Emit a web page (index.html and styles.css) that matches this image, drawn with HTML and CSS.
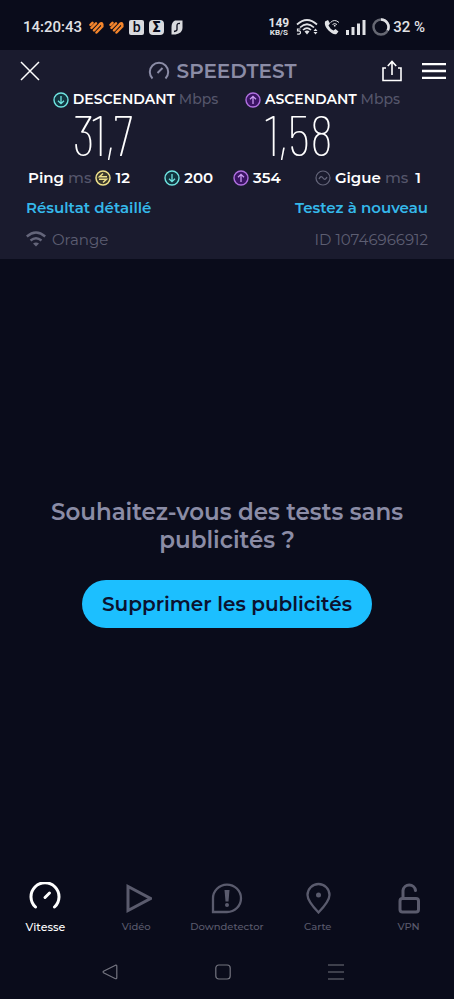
FILE: index.html
```html
<!DOCTYPE html>
<html lang="fr">
<head>
<meta charset="utf-8">
<meta name="viewport" content="width=device-width, initial-scale=1">
<title>Speedtest</title>
<link rel="stylesheet" href="styles.css">
</head>
<body>
<svg class="defs" aria-hidden="true">
  <symbol id="down" viewBox="0 0 16 16"><circle cx="8" cy="8" r="7" fill="#12343f" stroke="#6fe3e0" stroke-width="1.4"/><path d="M8 4v7.500M5 8.700l3 3 3-3" fill="none" stroke="#6fe3e0" stroke-width="1.3"/></symbol>
  <symbol id="up" viewBox="0 0 16 16"><circle cx="8" cy="8" r="7" fill="#3b1464" stroke="#b070e0" stroke-width="1.4"/><path d="M8 12V4.500M5 7.300l3-3 3 3" fill="none" stroke="#c99af0" stroke-width="1.3"/></symbol>
  <symbol id="heart" viewBox="0 0 15 13"><g fill="none" stroke="#f5862c" stroke-width="2.500" stroke-linecap="round" stroke-linejoin="round"><path d="M1.500 3.800L3.500 1.800M2.500 6.800L7 2.300M5 9.300L11 3M7.500 11.500L13.300 5.500M11 3Q12.800 1.200 13.300 3.200V5.500"/></g></symbol>
</svg>
<div class="phone">
  <div class="status">
    <span class="clock">14:20:43</span>
    <svg width="15" height="13"><use href="#heart"/></svg>
    <svg width="15" height="13"><use href="#heart"/></svg>
    <span class="badge badge-b">b</span>
    <span class="badge badge-s">Σ</span>
    <svg width="12" height="15" viewBox="0 0 12 15"><path d="M4 .5h7.500V8q0 5-7 6.500H.5V7Q.5 2 4 .5z" fill="#d9dade"/><path d="M9 3.500Q6 3 6 5.500T6 9.500T3 11.500" fill="none" stroke="#0a0c1b" stroke-width="1.300"/></svg>
    <span class="rate"><b>149</b><small>KB/S</small></span>
    <svg class="wifi5" width="22" height="16" viewBox="0 0 22 16"><g fill="none" stroke="#e1e2e6" stroke-width="1.700"><path d="M1 5.500Q11-3.500 21 5.500M4 8.500Q11 2 18 8.500M7 11Q11 7 15 11"/></g><path d="M8.500 12.500Q11 10.500 13.500 12.500L11 15.500z" fill="#e1e2e6"/><path d="M4.500 10H1.500v2Q4.500 11.500 4.500 13.500T1 15" fill="none" stroke="#e1e2e6" stroke-width="1.200"/><path d="M17.500 12l2-2.500 2 2.500zM17.500 13l2 2.500 2-2.500z" fill="#e1e2e6"/></svg>
    <svg class="call" width="16" height="16" viewBox="0 0 16 16"><path d="M1 2.500L4 1l2 3.500-1.500 2Q6 10 9.500 11.500l2-1.500 3 2.500-2 2.500Q9 16 4.500 11.500T1 2.500z" fill="#e1e2e6"/><g fill="none" stroke="#e1e2e6"><path d="M6.500 3.500q4-4 8.500 0M8.500 5.500q2-2 4.500 0"/></g><circle cx="10.700" cy="6.700" r=".9" fill="#e1e2e6"/></svg>
    <svg class="signal" width="20" height="16" viewBox="0 0 20 16"><path d="M0 11h3v5H0zM5.500 8h3v8h-3zM11 4.500h3V16h-3zM16.500 1h3v15h-3z" fill="#e1e2e6"/></svg>
    <svg class="battery" width="18" height="18" viewBox="0 0 18 18"><circle cx="9" cy="9" r="7.500" fill="none" stroke="#666873" stroke-width="2.500"/><path d="M9 1.500a7.500 7.500 0 0 1 6.800 10.700" fill="none" stroke="#e1e2e6" stroke-width="2.500"/></svg>
    <span class="pct">32 %</span>
  </div>

  <header class="panel">
    <div class="titlebar">
      <button class="icon-btn" aria-label="Fermer"><svg width="20" height="20" viewBox="0 0 20 20"><path d="M1 1l18 18M19 1L1 19" stroke="#fff" stroke-width="1.500"/></svg></button>
      <h1><svg width="22" height="20" viewBox="0 0 22 20"><g fill="none" stroke="#8b8ca6" stroke-width="2"><path d="M4.500 17.500A9.200 9.200 0 1 1 17.500 17.500"/><path d="M9.500 12l5-5"/></g></svg>SPEEDTEST</h1>
      <button class="icon-btn" aria-label="Partager"><svg width="20" height="22" viewBox="0 0 20 22"><path d="M4 8H1v12.500h18V8h-3M10 15V2M5.800 6L10 1.500 14.200 6" fill="none" stroke="#fff" stroke-width="1.600"/></svg></button>
      <button class="icon-btn" aria-label="Menu"><svg width="24" height="16" viewBox="0 0 24 16"><path d="M0 1.200h24M0 8h24M0 14.800h24" stroke="#fff" stroke-width="2.300"/></svg></button>
    </div>
    <div class="results">
      <section class="result"><svg width="16" height="16"><use href="#down"/></svg><h2>DESCENDANT <span>Mbps</span></h2><p>31,7</p></section>
      <section class="result"><svg width="16" height="16"><use href="#up"/></svg><h2>ASCENDANT <span>Mbps</span></h2><p>1,58</p></section>
    </div>
    <div class="latency">
      <div class="stat"><b>Ping <span>ms</span></b><svg width="16" height="16" viewBox="0 0 16 16"><circle cx="8" cy="8" r="7" fill="#39372c" stroke="#eee08a" stroke-width="1.500"/><path d="M12 6.700H4.500L8 3.500M4 9.300h7.500L8 12.500" fill="none" stroke="#eee08a" stroke-width="1.500"/></svg><b>12</b></div>
      <div class="loaded">
        <div class="stat"><svg width="16" height="16"><use href="#down"/></svg><b>200</b></div>
        <div class="stat"><svg width="16" height="16"><use href="#up"/></svg><b>354</b></div>
      </div>
      <div class="stat jitter"><svg width="16" height="16" viewBox="0 0 16 16"><circle cx="8" cy="8" r="7" fill="none" stroke="#64657a" stroke-width="1.200"/><path d="M4 9q2-4 4-1t4-1" fill="none" stroke="#64657a" stroke-width="1.300"/></svg><b>Gigue <span>ms</span></b><b class="value">1</b></div>
    </div>
    <div class="links"><a href="#detail">Résultat détaillé</a><a href="#test">Testez à nouveau</a></div>
    <div class="network">
      <svg width="20" height="16" viewBox="0 0 20 16"><path d="M.8 5.500Q10-2.500 19.200 5.500M4.500 9.500Q10 5 15.500 9.500" fill="none" stroke="#64657a" stroke-width="2.400"/><path d="M7 12.500Q10 10.500 13 12.500L10 15.500z" fill="#64657a"/></svg>
      <span>Orange</span><span class="id">ID 10746966912</span>
    </div>
  </header>

  <main class="promo">
    <h2>Souhaitez-vous des tests sans publicités ?</h2>
    <button class="cta">Supprimer les publicités</button>
  </main>

  <nav class="tabs">
    <a class="tab active" href="#vitesse"><svg width="32" height="32" viewBox="0 0 32 32"><g fill="none" stroke="currentColor" stroke-width="3" stroke-linecap="round"><path d="M6.500 25A14 14 0 1 1 25.500 25"/><path d="M16 15.500l4.500-4.500"/></g></svg>Vitesse</a>
    <a class="tab" href="#video"><svg width="32" height="32" viewBox="0 0 32 32"><path d="M8 4.500v24L30.500 16.500z" fill="none" stroke="currentColor" stroke-width="3"/></svg>Vidéo</a>
    <a class="tab" href="#downdetector"><svg width="32" height="32" viewBox="0 0 32 32"><path d="M2 30V16.500a14 13.700 0 1 1 14 13.500z" fill="none" stroke="currentColor" stroke-width="2.300"/><path d="M13.500 8h5l-1 11.500h-3z" fill="currentColor"/><circle cx="16" cy="23" r="2" fill="currentColor"/></svg>Downdetector</a>
    <a class="tab" href="#carte"><svg width="32" height="32" viewBox="0 0 32 32"><path d="M16.500 30.500Q5.500 19 5.500 13a11 11 0 0 1 22 0Q27.500 19 16.500 30.500z" fill="none" stroke="currentColor" stroke-width="2.300"/><circle cx="16.500" cy="13" r="2.500" fill="currentColor"/></svg>Carte</a>
    <a class="tab" href="#vpn"><svg width="32" height="32" viewBox="0 0 32 32"><rect x="7" y="16.500" width="18.500" height="13.500" rx="2.500" fill="none" stroke="currentColor" stroke-width="3"/><path d="M10 16V8.500a6.300 6.300 0 0 1 12.500 0" fill="none" stroke="currentColor" stroke-width="3" stroke-linecap="round"/></svg>VPN</a>
  </nav>
  <div class="system">
    <button aria-label="Retour"><svg width="16" height="16" viewBox="0 0 16 16"><path d="M13.500 1.200L1.500 7.300q-.8.700 0 1.400l12 6q1.300.3 1.300-1V2.200q0-1.300-1.300-1z" fill="none" stroke="#73747f" stroke-width="1.200"/></svg></button>
    <button aria-label="Accueil"><svg width="16" height="16" viewBox="0 0 16 16"><rect x=".8" y="1" width="14.400" height="14" rx="3" fill="none" stroke="#73747f" stroke-width="1.200"/></svg></button>
    <button aria-label="Applications récentes"><svg width="16" height="16" viewBox="0 0 16 16"><path d="M0 1h16M0 8h16M0 15h16" stroke="#73747f" stroke-width="1.200"/></svg></button>
  </div>
</div>
</body>
</html>
```
FILE: styles.css
```css
* { box-sizing: border-box; }
body {
  margin: 0;
  background: #0a0c1b;
  color: #fff;
  font-family: Montserrat, Inter, sans-serif;
}
h1, h2, p { margin: 0; }
svg { display: block; flex: none; }
button { border: 0; padding: 0; background: none; color: inherit; font: inherit; cursor: pointer; }
a { text-decoration: none; color: inherit; }
.defs { position: absolute; width: 0; height: 0; }
.phone { min-height: 100vh; display: flex; flex-direction: column; }

.status {
  display: flex;
  align-items: center;
  gap: 5px;
  height: 50px;
  padding: 4px 29px 0 23px;
  color: #e1e2e6;
  font-family: Roboto, sans-serif;
}
.clock, .pct { font-size: 15px; font-weight: 500; white-space: nowrap; }
.clock { margin-right: 2px; }
.badge {
  width: 15px;
  height: 15px;
  border-radius: 2px;
  background: #d9dade;
  color: #0a0c1b;
  font-size: 14px;
  font-weight: 500;
  line-height: 15px;
  text-align: center;
}
.badge-s { margin-right: 2px; border-radius: 4px; font-weight: 900; }
.rate { margin-left: auto; display: grid; text-align: center; }
.rate b { font-size: 12px; line-height: 10px; }
.rate small { font-size: 8px; line-height: 9px; font-weight: 700; }
.wifi5 { margin-left: 2px; }
.call, .signal, .battery { margin-left: 1px; }
.pct { margin-left: -2px; }

.panel { background: #1a1b2e; }
.titlebar { display: flex; align-items: center; height: 41px; padding: 0 8px 0 20px; gap: 20px; }
.titlebar h1 {
  flex: 1;
  display: flex;
  justify-content: center;
  align-items: center;
  gap: 7px;
  padding-left: 22px;
  color: #8b8ca6;
  font-size: 20px;
  font-weight: 600;
  line-height: 24px;
}
.results { display: grid; grid-template-columns: 1fr 1fr; padding: 0 38px 0 42px; }
.result {
  display: grid;
  grid-template-columns: 16px auto;
  justify-content: center;
  align-items: center;
  column-gap: 4px;
}
.result h2 { font-size: 14px; font-weight: 600; line-height: 17px; white-space: nowrap; }
.result h2 span, .stat span { color: #55566b; font-weight: 500; }
.result p {
  grid-column: 2;
  height: 57px;
  font-family: "Barlow Condensed", "Roboto Condensed", Roboto, sans-serif;
  font-size: 57px;
  font-weight: 200;
  line-height: 50px;
}
.latency { display: flex; justify-content: space-between; align-items: center; height: 26px; padding: 0 33px 0 28px; }
.loaded { display: flex; gap: 20px; }
.stat { display: flex; align-items: center; gap: 4px; }
.stat b { font-size: 15px; font-weight: 600; line-height: 18px; white-space: nowrap; }
.jitter .value { margin-left: 3px; }
.links { display: flex; justify-content: space-between; align-items: center; height: 32px; padding: 0 26px; color: #35b8ea; font-size: 15px; font-weight: 600; }
.network { display: flex; align-items: center; gap: 6px; height: 36px; padding: 0 26px 4px; color: #5d5e72; font-size: 15px; }
.id { margin-left: auto; }

.promo { flex: 1; display: flex; flex-direction: column; align-items: center; justify-content: center; padding: 0 48px 16px; }
.promo h2 { color: #8b8ca6; font-size: 23px; font-weight: 600; line-height: 28px; text-align: center; }
.cta { margin-top: 26px; height: 48px; padding: 0 20px; border-radius: 24px; background: #1cbfff; color: #0b1230; font-size: 20px; font-weight: 600; white-space: nowrap; }

.tabs { display: grid; grid-template-columns: repeat(5, 1fr); color: #5a5b6d; }
.tab { display: flex; flex-direction: column; align-items: center; gap: 6px; font-size: 10px; font-weight: 500; line-height: 14px; }
.tab.active { color: #fff; font-size: 11px; }
.system { display: grid; grid-template-columns: repeat(3, 1fr); height: 65px; padding: 10px 62px 0 54px; align-items: center; justify-items: center; }
```
